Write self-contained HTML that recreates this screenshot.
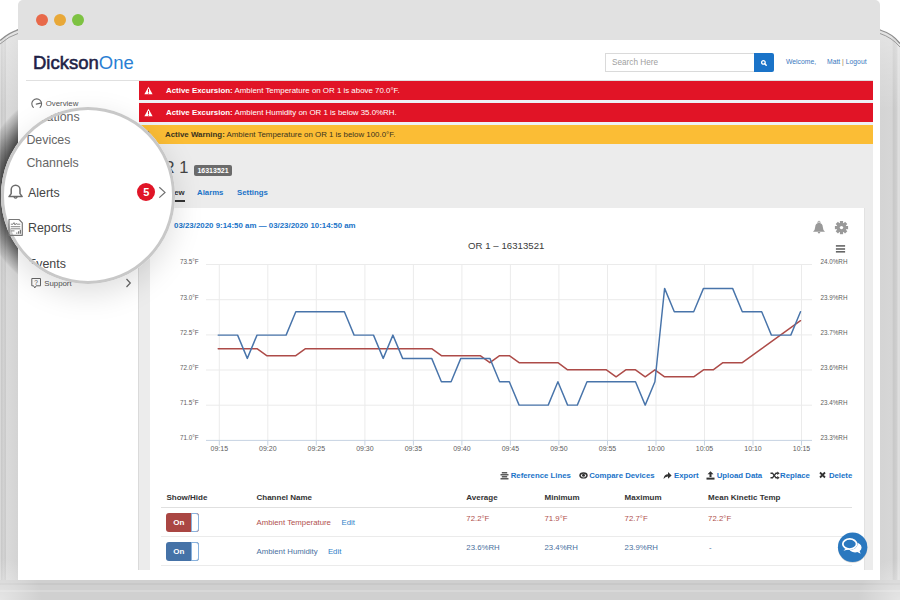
<!DOCTYPE html>
<html><head><meta charset="utf-8">
<style>
*{margin:0;padding:0;box-sizing:border-box}
html,body{width:900px;height:600px;overflow:hidden;background:#fff;font-family:"Liberation Sans",sans-serif;position:relative}
.a{position:absolute;white-space:nowrap}
.dot{width:12px;height:12px;border-radius:50%;top:14px}
.bar{left:139px;width:734px;height:19px;color:#fff;font-size:7.9px;line-height:20.2px}
.red{background:#e11426}
.yel{background:#fbbd35;color:#3a3320}
.tri{position:absolute;left:5px;top:5px}
.tbt{top:470px;font-size:7.8px;line-height:11px;font-weight:bold;color:#1a73c8}
.th{font-size:8px;line-height:8px;font-weight:bold;color:#333}
.td{font-size:7.8px;line-height:7.8px}
.tog{left:166px;width:33px;height:18.5px;border-radius:3px}
.tog span{position:absolute;left:0;top:0;width:25.6px;text-align:center;color:#fff;font-weight:bold;font-size:8px;line-height:19px}
.tog i{position:absolute;left:25px;top:0;width:8px;height:18.5px;background:#fff;border:1px solid #88b2de;border-radius:0 3px 3px 0}
</style></head><body>
<svg class="a" style="left:0;top:0" width="900" height="600" viewBox="0 0 900 600"><defs><linearGradient id="gl" x1="0" x2="1" y1="0" y2="0"><stop offset="0" stop-color="#e0e0e0"/><stop offset="0.08" stop-color="#c9c9c9"/><stop offset="0.2" stop-color="#d2d2d2"/><stop offset="0.3" stop-color="#c9c9c9"/><stop offset="0.36" stop-color="#dadada"/><stop offset="1" stop-color="#d3d3d3"/></linearGradient><linearGradient id="gr" x1="0" x2="1" y1="0" y2="0"><stop offset="0" stop-color="#d4d4d4"/><stop offset="0.6" stop-color="#d6d6d6"/><stop offset="0.68" stop-color="#c8c8c8"/><stop offset="0.85" stop-color="#d0d0d0"/><stop offset="0.9" stop-color="#e0e0e0"/><stop offset="1" stop-color="#dcdcdc"/></linearGradient></defs><path d="M0 41 Q9 33 18 30 V600 H0 Z" fill="url(#gl)"/><path d="M0 40.5 Q9 32.5 18 29.8" fill="none" stroke="#555" stroke-width="1.3"/><path d="M880 30 Q893 34 900 43.5 V600 H880 Z" fill="url(#gr)"/><path d="M880 30 Q893 34 900 43.5" fill="none" stroke="#555" stroke-width="1.3"/><rect x="0" y="580" width="900" height="20" fill="#d0d0d0"/><rect x="0" y="583" width="900" height="2" fill="#c8c8c8"/><rect x="0" y="590" width="900" height="2" fill="#d8d8d8"/><linearGradient id="tw" x1="0" x2="0" y1="0" y2="1"><stop offset="0" stop-color="#fff" stop-opacity="0.35"/><stop offset="1" stop-color="#fff" stop-opacity="0"/></linearGradient><rect x="0" y="30" width="18" height="80" fill="url(#tw)"/><rect x="880" y="30" width="20" height="80" fill="url(#tw)"/><path d="M0 44 Q9 36 18 33.5" fill="none" stroke="#888" stroke-width="0.8"/><path d="M880 33.5 Q892 37.5 900 47" fill="none" stroke="#888" stroke-width="0.8"/><radialGradient id="cw"><stop offset="0" stop-color="#fff" stop-opacity="0.45"/><stop offset="1" stop-color="#fff" stop-opacity="0"/></radialGradient><circle cx="0" cy="600" r="42" fill="url(#cw)"/><circle cx="900" cy="600" r="42" fill="url(#cw)"/></svg>
<div class="a" style="left:0;top:0;width:18px;height:600px;background:radial-gradient(circle at 88.3px 192px, rgba(0,0,0,0.62) 87px, rgba(0,0,0,0.45) 93px, rgba(0,0,0,0.22) 101px, rgba(0,0,0,0.08) 107px, rgba(0,0,0,0) 109px)"></div>
<div class="a" style="left:18px;top:0;width:862px;height:580px;background:#fff;border-radius:5px 5px 0 0"></div>
<div class="a" style="left:18px;top:0;width:862px;height:40px;background:#e1e1e1;border-radius:5px 5px 0 0"></div>
<div class="a dot" style="left:36px;background:#e8694a"></div>
<div class="a dot" style="left:54px;background:#e8a838"></div>
<div class="a dot" style="left:72px;background:#7dc242"></div>
<div class="a" style="left:33px;top:52px;font-size:18.5px;line-height:22px"><span style="color:#1e2246;-webkit-text-stroke:0.55px #1e2246">Dickson</span><span style="color:#2a7fd4">One</span></div>
<div class="a" style="left:26px;top:80px;width:847px;height:1px;background:#e0e0e0"></div>
<div class="a" style="left:605px;top:53px;width:150px;height:19px;border:1px solid #dadada;font-size:8.2px;line-height:17px;color:#a0a0a0;padding-left:6px">Search Here</div>
<div class="a" style="left:754px;top:53px;width:20px;height:19px;background:#1a73c8;border-radius:0 2px 2px 0"></div>
<svg class="a" style="left:759px;top:58px" width="10" height="10" viewBox="0 0 10 10"><circle cx="4.4" cy="4.4" r="1.8" fill="none" stroke="#fff" stroke-width="1.3"/><line x1="5.8" y1="5.8" x2="7.2" y2="7.2" stroke="#fff" stroke-width="1.5" stroke-linecap="round"/></svg>
<div class="a" style="left:786px;top:57px;font-size:6.8px;line-height:10px;color:#3a78c0">Welcome,</div>
<div class="a" style="left:827px;top:57px;font-size:6.8px;line-height:10px;color:#3a78c0">Matt <span style="color:#a07a50">|</span> Logout</div>
<div class="a" style="left:139px;top:81px;width:734px;height:489px;background:#ececec"></div>
<div class="a" style="left:139px;top:100px;width:734px;height:25px;background:#eef1f4"></div>
<div class="a bar red" style="top:81px"><svg class="tri" width="9" height="9" viewBox="0 0 9 9"><path d="M4.5 0.8 L8.6 8.2 L0.4 8.2 Z" fill="#fff"/><rect x="4" y="3" width="1" height="3" fill="#e11426"/><rect x="4" y="6.6" width="1" height="1" fill="#e11426"/></svg><span style="position:absolute;left:27px"><b>Active Excursion:</b> Ambient Temperature on OR 1 is above 70.0°F.</span></div>
<div class="a bar red" style="top:103px"><svg class="tri" width="9" height="9" viewBox="0 0 9 9"><path d="M4.5 0.8 L8.6 8.2 L0.4 8.2 Z" fill="#fff"/><rect x="4" y="3" width="1" height="3" fill="#e11426"/><rect x="4" y="6.6" width="1" height="1" fill="#e11426"/></svg><span style="position:absolute;left:27px"><b>Active Excursion:</b> Ambient Humidity on OR 1 is below 35.0%RH.</span></div>
<div class="a bar yel" style="top:125px"><svg class="tri" width="9" height="9" viewBox="0 0 9 9"><path d="M4.5 0.8 L8.6 8.2 L0.4 8.2 Z" fill="#3a3320"/><rect x="4" y="3" width="1" height="3" fill="#fbbd35"/><rect x="4" y="6.6" width="1" height="1" fill="#fbbd35"/></svg><span style="position:absolute;left:26px"><b>Active Warning:</b> Ambient Temperature on OR 1 is below 100.0°F.</span></div>
<div class="a" style="left:150px;top:159.03px;font-size:16.5px;line-height:16.5px;color:#444;">OR 1</div>
<div class="a" style="left:194px;top:165px;width:38px;height:11px;background:#6b6b6b;border-radius:2px;color:#fff;font-size:7px;line-height:11px;font-weight:bold;text-align:center">16313521</div>
<div class="a" style="left:150px;top:189.00px;font-size:7.8px;line-height:7.8px;color:#333;font-weight:bold">Overview</div>
<div class="a" style="left:150px;top:199.8px;width:35px;height:2px;background:#333"></div>
<div class="a" style="left:197px;top:189.00px;font-size:7.8px;line-height:7.8px;color:#1a73c8;font-weight:bold">Alarms</div>
<div class="a" style="left:237px;top:189.00px;font-size:7.8px;line-height:7.8px;color:#1a73c8;font-weight:bold">Settings</div>
<div class="a" style="left:138px;top:145px;width:12px;height:425px;background:#ececec;border-left:1px solid #dadada"></div>
<div class="a" style="left:150px;top:208px;width:713.5px;height:362px;background:#fff"></div><div class="a" style="left:863.5px;top:208px;width:1px;height:362px;background:#e2e2e2"></div>
<div class="a" style="left:174px;top:220.5px;font-size:7.9px;line-height:10px;font-weight:bold;color:#1a73c8">03/23/2020 9:14:50 am — 03/23/2020 10:14:50 am</div>
<div class="a" style="left:468px;top:240.3px;font-size:9.6px;line-height:11px;color:#3a3a3a;letter-spacing:0.05px">OR 1 – 16313521</div>
<svg class="a" style="left:0;top:0" width="900" height="600" viewBox="0 0 900 600">
<line x1="206" y1="264.5" x2="812" y2="264.5" stroke="#ebebeb" stroke-width="1"/>
<line x1="206" y1="299.7" x2="812" y2="299.7" stroke="#ebebeb" stroke-width="1"/>
<line x1="206" y1="334.9" x2="812" y2="334.9" stroke="#ebebeb" stroke-width="1"/>
<line x1="206" y1="370.0" x2="812" y2="370.0" stroke="#ebebeb" stroke-width="1"/>
<line x1="206" y1="405.2" x2="812" y2="405.2" stroke="#ebebeb" stroke-width="1"/>
<line x1="219.3" y1="264.5" x2="219.3" y2="440.4" stroke="#ebebeb" stroke-width="1"/>
<line x1="267.8" y1="264.5" x2="267.8" y2="440.4" stroke="#ebebeb" stroke-width="1"/>
<line x1="316.3" y1="264.5" x2="316.3" y2="440.4" stroke="#ebebeb" stroke-width="1"/>
<line x1="364.9" y1="264.5" x2="364.9" y2="440.4" stroke="#ebebeb" stroke-width="1"/>
<line x1="413.4" y1="264.5" x2="413.4" y2="440.4" stroke="#ebebeb" stroke-width="1"/>
<line x1="461.9" y1="264.5" x2="461.9" y2="440.4" stroke="#ebebeb" stroke-width="1"/>
<line x1="510.4" y1="264.5" x2="510.4" y2="440.4" stroke="#ebebeb" stroke-width="1"/>
<line x1="558.9" y1="264.5" x2="558.9" y2="440.4" stroke="#ebebeb" stroke-width="1"/>
<line x1="607.5" y1="264.5" x2="607.5" y2="440.4" stroke="#ebebeb" stroke-width="1"/>
<line x1="656.0" y1="264.5" x2="656.0" y2="440.4" stroke="#ebebeb" stroke-width="1"/>
<line x1="704.5" y1="264.5" x2="704.5" y2="440.4" stroke="#ebebeb" stroke-width="1"/>
<line x1="753.0" y1="264.5" x2="753.0" y2="440.4" stroke="#ebebeb" stroke-width="1"/>
<line x1="801.5" y1="264.5" x2="801.5" y2="440.4" stroke="#ebebeb" stroke-width="1"/>
<line x1="206" y1="440.4" x2="812" y2="440.4" stroke="#c6d3e2" stroke-width="1"/>
<line x1="219.3" y1="440.4" x2="219.3" y2="445.5" stroke="#c6d3e2" stroke-width="1"/>
<line x1="267.8" y1="440.4" x2="267.8" y2="445.5" stroke="#c6d3e2" stroke-width="1"/>
<line x1="316.3" y1="440.4" x2="316.3" y2="445.5" stroke="#c6d3e2" stroke-width="1"/>
<line x1="364.9" y1="440.4" x2="364.9" y2="445.5" stroke="#c6d3e2" stroke-width="1"/>
<line x1="413.4" y1="440.4" x2="413.4" y2="445.5" stroke="#c6d3e2" stroke-width="1"/>
<line x1="461.9" y1="440.4" x2="461.9" y2="445.5" stroke="#c6d3e2" stroke-width="1"/>
<line x1="510.4" y1="440.4" x2="510.4" y2="445.5" stroke="#c6d3e2" stroke-width="1"/>
<line x1="558.9" y1="440.4" x2="558.9" y2="445.5" stroke="#c6d3e2" stroke-width="1"/>
<line x1="607.5" y1="440.4" x2="607.5" y2="445.5" stroke="#c6d3e2" stroke-width="1"/>
<line x1="656.0" y1="440.4" x2="656.0" y2="445.5" stroke="#c6d3e2" stroke-width="1"/>
<line x1="704.5" y1="440.4" x2="704.5" y2="445.5" stroke="#c6d3e2" stroke-width="1"/>
<line x1="753.0" y1="440.4" x2="753.0" y2="445.5" stroke="#c6d3e2" stroke-width="1"/>
<line x1="801.5" y1="440.4" x2="801.5" y2="445.5" stroke="#c6d3e2" stroke-width="1"/>
<path d="M218.2 348.7 L227.9 348.7 L237.6 348.7 L247.3 348.7 L257.0 348.7 L266.7 355.7 L276.4 355.7 L286.1 355.7 L295.8 355.7 L305.5 348.7 L315.2 348.7 L325.0 348.7 L334.7 348.7 L344.4 348.7 L354.1 348.7 L363.8 348.7 L373.5 348.7 L383.2 348.7 L392.9 348.7 L402.6 348.7 L412.3 348.7 L422.0 348.7 L431.7 348.7 L441.4 355.7 L451.1 355.7 L460.8 355.7 L470.5 355.7 L480.2 355.7 L489.9 362.7 L499.6 355.7 L509.3 355.7 L519.1 362.7 L528.8 362.7 L538.5 362.7 L548.2 362.7 L557.9 362.7 L567.6 369.8 L577.3 369.8 L587.0 369.8 L596.7 369.8 L606.4 369.8 L616.1 376.8 L625.8 369.8 L635.5 369.8 L645.2 376.8 L654.9 369.8 L664.6 376.8 L674.3 376.8 L684.0 376.8 L693.7 376.8 L703.5 369.8 L713.2 369.8 L722.9 362.7 L732.6 362.7 L742.3 362.7 L752.0 355.7 L761.7 348.7 L771.4 341.7 L781.1 334.7 L790.8 327.7 L800.5 320.7" fill="none" stroke="#ad4b48" stroke-width="1.45" stroke-linejoin="round" stroke-linecap="round"/>
<path d="M218.2 335.1 L227.9 335.1 L237.6 335.1 L247.3 358.4 L257.0 335.1 L266.7 335.1 L276.4 335.1 L286.1 335.1 L295.8 311.7 L305.5 311.7 L315.2 311.7 L325.0 311.7 L334.7 311.7 L344.4 311.7 L354.1 335.1 L363.8 335.1 L373.5 335.1 L383.2 358.4 L392.9 335.1 L402.6 358.4 L412.3 358.4 L422.0 358.4 L431.7 358.4 L441.4 381.7 L451.1 381.7 L460.8 358.4 L470.5 358.4 L480.2 358.4 L489.9 358.4 L499.6 381.7 L509.3 381.7 L519.1 405.1 L528.8 405.1 L538.5 405.1 L548.2 405.1 L557.9 381.7 L567.6 405.1 L577.3 405.1 L587.0 381.7 L596.7 381.7 L606.4 381.7 L616.1 381.7 L625.8 381.7 L635.5 381.7 L645.2 405.1 L654.9 381.7 L664.6 288.4 L674.3 311.7 L684.0 311.7 L693.7 311.7 L703.5 288.4 L713.2 288.4 L722.9 288.4 L732.6 288.4 L742.3 311.7 L752.0 311.7 L761.7 311.7 L771.4 335.1 L781.1 335.1 L790.8 335.1 L800.5 311.7" fill="none" stroke="#4874aa" stroke-width="1.45" stroke-linejoin="round" stroke-linecap="round"/>
</svg>
<div class="a" style="left:150px;width:48.5px;text-align:right;top:257.4px;font-size:6.3px;line-height:10px;color:#606060">73.5°F</div>
<div class="a" style="left:150px;width:48.5px;text-align:right;top:292.6px;font-size:6.3px;line-height:10px;color:#606060">73.0°F</div>
<div class="a" style="left:150px;width:48.5px;text-align:right;top:327.8px;font-size:6.3px;line-height:10px;color:#606060">72.5°F</div>
<div class="a" style="left:150px;width:48.5px;text-align:right;top:362.9px;font-size:6.3px;line-height:10px;color:#606060">72.0°F</div>
<div class="a" style="left:150px;width:48.5px;text-align:right;top:398.1px;font-size:6.3px;line-height:10px;color:#606060">71.5°F</div>
<div class="a" style="left:150px;width:48.5px;text-align:right;top:433.3px;font-size:6.3px;line-height:10px;color:#606060">71.0°F</div>
<div class="a" style="left:820.5px;top:257.4px;font-size:6.3px;line-height:10px;color:#606060">24.0%RH</div>
<div class="a" style="left:820.5px;top:292.6px;font-size:6.3px;line-height:10px;color:#606060">23.9%RH</div>
<div class="a" style="left:820.5px;top:327.8px;font-size:6.3px;line-height:10px;color:#606060">23.7%RH</div>
<div class="a" style="left:820.5px;top:362.9px;font-size:6.3px;line-height:10px;color:#606060">23.6%RH</div>
<div class="a" style="left:820.5px;top:398.1px;font-size:6.3px;line-height:10px;color:#606060">23.4%RH</div>
<div class="a" style="left:820.5px;top:433.3px;font-size:6.3px;line-height:10px;color:#606060">23.3%RH</div>
<div class="a" style="left:199.3px;width:40px;text-align:center;top:444.3px;font-size:7px;line-height:10px;color:#606060">09:15</div>
<div class="a" style="left:247.8px;width:40px;text-align:center;top:444.3px;font-size:7px;line-height:10px;color:#606060">09:20</div>
<div class="a" style="left:296.3px;width:40px;text-align:center;top:444.3px;font-size:7px;line-height:10px;color:#606060">09:25</div>
<div class="a" style="left:344.9px;width:40px;text-align:center;top:444.3px;font-size:7px;line-height:10px;color:#606060">09:30</div>
<div class="a" style="left:393.4px;width:40px;text-align:center;top:444.3px;font-size:7px;line-height:10px;color:#606060">09:35</div>
<div class="a" style="left:441.9px;width:40px;text-align:center;top:444.3px;font-size:7px;line-height:10px;color:#606060">09:40</div>
<div class="a" style="left:490.4px;width:40px;text-align:center;top:444.3px;font-size:7px;line-height:10px;color:#606060">09:45</div>
<div class="a" style="left:538.9px;width:40px;text-align:center;top:444.3px;font-size:7px;line-height:10px;color:#606060">09:50</div>
<div class="a" style="left:587.5px;width:40px;text-align:center;top:444.3px;font-size:7px;line-height:10px;color:#606060">09:55</div>
<div class="a" style="left:636.0px;width:40px;text-align:center;top:444.3px;font-size:7px;line-height:10px;color:#606060">10:00</div>
<div class="a" style="left:684.5px;width:40px;text-align:center;top:444.3px;font-size:7px;line-height:10px;color:#606060">10:05</div>
<div class="a" style="left:733.0px;width:40px;text-align:center;top:444.3px;font-size:7px;line-height:10px;color:#606060">10:10</div>
<div class="a" style="left:781.5px;width:40px;text-align:center;top:444.3px;font-size:7px;line-height:10px;color:#606060">10:15</div>
<svg class="a" style="left:834px;top:243px" width="12" height="11" viewBox="0 0 12 11"><rect x="1.9" y="2.1" width="9.2" height="1.6" fill="#666"/><rect x="1.9" y="5.2" width="9.2" height="1.6" fill="#666"/><rect x="1.9" y="8.0" width="9.2" height="1.6" fill="#666"/></svg>
<svg class="a" style="left:812px;top:220px" width="14" height="16" viewBox="0 0 14 16"><path d="M1 11.8 Q3 10.5 3.2 7 Q3.4 3.2 7 2.8 Q10.6 3.2 10.8 7 Q11 10.5 13 11.8 Z" fill="#999"/><circle cx="7" cy="2.3" r="1.1" fill="none" stroke="#999" stroke-width="0.9"/><path d="M5.6 12 Q7 15 8.4 12 Z" fill="#999"/></svg>
<svg class="a" style="left:834px;top:220px" width="15" height="15" viewBox="0 0 15 15"><g fill="#999" transform="translate(7.5 7.6)"><circle r="4.9"/><rect x="-1.6" y="-6.6" width="3.2" height="3" transform="rotate(0)"/><rect x="-1.6" y="-6.6" width="3.2" height="3" transform="rotate(45)"/><rect x="-1.6" y="-6.6" width="3.2" height="3" transform="rotate(90)"/><rect x="-1.6" y="-6.6" width="3.2" height="3" transform="rotate(135)"/><rect x="-1.6" y="-6.6" width="3.2" height="3" transform="rotate(180)"/><rect x="-1.6" y="-6.6" width="3.2" height="3" transform="rotate(225)"/><rect x="-1.6" y="-6.6" width="3.2" height="3" transform="rotate(270)"/><rect x="-1.6" y="-6.6" width="3.2" height="3" transform="rotate(315)"/><circle r="1.7" fill="#fff"/></g></svg>
<svg class="a" style="left:500px;top:471px" width="9" height="9" viewBox="0 0 9 9"><rect x="1.8" y="1.2" width="5.4" height="1.2" fill="#333"/><rect x="0.5" y="3.2" width="8" height="1.2" fill="#333"/><rect x="1.8" y="5.2" width="5.4" height="1.2" fill="#333"/><rect x="0.5" y="7.2" width="8" height="1.2" fill="#333"/></svg>
<div class="a tbt" style="left:510.7px">Reference Lines</div>
<svg class="a" style="left:579px;top:471px" width="9" height="9" viewBox="0 0 9 9"><ellipse cx="4.5" cy="4.4" rx="4.2" ry="3.1" fill="#333"/><ellipse cx="4.5" cy="4.6" rx="2.6" ry="1.9" fill="#fff"/><circle cx="4.5" cy="4.3" r="1.5" fill="#333"/></svg>
<div class="a tbt" style="left:589.2px">Compare Devices</div>
<svg class="a" style="left:663px;top:471px" width="9" height="9" viewBox="0 0 9 9"><path d="M0.5 8 Q1 3.5 5 3.3 L5 1 L8.6 4.4 L5 7.8 L5 5.5 Q2.3 5.4 0.5 8 Z" fill="#333"/></svg>
<div class="a tbt" style="left:674px">Export</div>
<svg class="a" style="left:706px;top:471px" width="9" height="9" viewBox="0 0 9 9"><path d="M4.5 0.3 L7.5 3.3 L5.5 3.3 L5.5 6 L3.5 6 L3.5 3.3 L1.5 3.3 Z" fill="#333"/><rect x="0.5" y="6.6" width="8" height="2" fill="#333"/></svg>
<div class="a tbt" style="left:716.7px">Upload Data</div>
<svg class="a" style="left:770px;top:471px" width="10" height="9" viewBox="0 0 10 9"><path d="M0.5 2.2 L2.5 2.2 L6 6.8 L7.5 6.8" fill="none" stroke="#333" stroke-width="1.4"/><path d="M0.5 6.8 L2.5 6.8 L6 2.2 L7.5 2.2" fill="none" stroke="#333" stroke-width="1.4"/><path d="M7.2 0.4 L9.7 2.2 L7.2 4 Z M7.2 5 L9.7 6.8 L7.2 8.6 Z" fill="#333"/></svg>
<div class="a tbt" style="left:780px">Replace</div>
<svg class="a" style="left:819px;top:471px" width="7" height="8" viewBox="0 0 7 8"><path d="M1 1.5 L6 6.5 M6 1.5 L1 6.5" stroke="#333" stroke-width="1.8"/></svg>
<div class="a tbt" style="left:828.9px">Delete</div>
<div class="a th" style="left:166.5px;top:494.03px">Show/Hide</div>
<div class="a th" style="left:256.5px;top:494.03px">Channel Name</div>
<div class="a th" style="left:466.3px;top:494.03px">Average</div>
<div class="a th" style="left:544.5px;top:494.03px">Minimum</div>
<div class="a th" style="left:624.6px;top:494.03px">Maximum</div>
<div class="a th" style="left:708.1px;top:494.03px">Mean Kinetic Temp</div>
<div class="a" style="left:161px;top:507px;width:691px;height:1.2px;background:#e0e0e0"></div>
<div class="a" style="left:161px;top:536px;width:691px;height:1px;background:#ebebeb"></div>
<div class="a" style="left:161px;top:565px;width:691px;height:1px;background:#ebebeb"></div>
<div class="a tog" style="top:513px;background:#aa4643"><span>On</span><i></i></div>
<div class="a tog" style="top:542px;background:#4572a7"><span>On</span><i></i></div>
<div class="a td" style="left:256.5px;top:518.80px;color:#b0504d">Ambient Temperature</div>
<div class="a td" style="left:341.5px;top:518.80px;color:#2f7fc8">Edit</div>
<div class="a td" style="left:256.5px;top:548.00px;color:#4a6f9e">Ambient Humidity</div>
<div class="a td" style="left:327.9px;top:548.00px;color:#2f7fc8">Edit</div>
<div class="a td" style="left:466.3px;top:514.70px;color:#b0504d">72.2°F</div>
<div class="a td" style="left:544.5px;top:514.70px;color:#b0504d">71.9°F</div>
<div class="a td" style="left:624.6px;top:514.70px;color:#b0504d">72.7°F</div>
<div class="a td" style="left:708.1px;top:514.70px;color:#b0504d">72.2°F</div>
<div class="a td" style="left:466.3px;top:543.90px;color:#4a6f9e">23.6%RH</div>
<div class="a td" style="left:544.5px;top:543.90px;color:#4a6f9e">23.4%RH</div>
<div class="a td" style="left:624.6px;top:543.90px;color:#4a6f9e">23.9%RH</div>
<div class="a td" style="left:709px;top:543.90px;color:#4a6f9e">-</div>
<div class="a" style="left:45.8px;top:99.90px;font-size:7.8px;line-height:7.8px;color:#555;">Overview</div>
<svg class="a" style="left:30px;top:98px" width="13" height="11" viewBox="0 0 13 11"><path d="M3.3 9.3 A4.9 4.9 0 1 1 10.1 9.3" fill="none" stroke="#666" stroke-width="1.1" stroke-linecap="round"/><path d="M6.3 6.2 L10.6 5.2" stroke="#666" stroke-width="1.2" stroke-linecap="round"/></svg>
<div class="a" style="left:44.3px;top:279.70px;font-size:7.8px;line-height:7.8px;color:#555;">Support</div>
<svg class="a" style="left:30px;top:277px" width="12" height="13" viewBox="0 0 12 13"><path d="M1.8 1.5 H10.5 V8.8 H6.2 L4.8 10.9 L3.6 8.8 H1.8 Z" fill="none" stroke="#666" stroke-width="1"/><text x="6.1" y="7.6" font-size="6.5" font-family="Liberation Sans" fill="#555" text-anchor="middle">?</text></svg>
<svg class="a" style="left:125px;top:278px" width="7" height="10" viewBox="0 0 7 10"><path d="M1.5 1 L5.3 5 L1.5 9" fill="none" stroke="#666" stroke-width="1.2"/></svg>
<div class="a" style="left:0.9px;top:107.3px;width:174.2px;height:176.3px;border-radius:50%;box-shadow:0 10px 30px rgba(0,0,0,0.13)"></div>
<div class="a" style="left:0.9px;top:107.3px;width:174.2px;height:176.3px;border-radius:50%;background:#fff;overflow:hidden">
<div class="a" style="left:25.7px;top:4.10px;font-size:12.4px;line-height:12.4px;color:#666;">Locations</div>
<div class="a" style="left:25.5px;top:26.60px;font-size:12.4px;line-height:12.4px;color:#666;">Devices</div>
<div class="a" style="left:25.5px;top:49.70px;font-size:12.4px;line-height:12.4px;color:#666;">Channels</div>
<div class="a" style="left:27.1px;top:79.40px;font-size:12.4px;line-height:12.4px;color:#444;">Alerts</div>
<div class="a" style="left:27.1px;top:115.10px;font-size:12.4px;line-height:12.4px;color:#444;">Reports</div>
<div class="a" style="left:27.1px;top:151.20px;font-size:12.4px;line-height:12.4px;color:#444;">Events</div>
</div>
<div class="a" style="left:0.9px;top:107.3px;width:174.2px;height:176.3px;border-radius:50%;border:3.7px solid #c8c8c8"></div>
<svg class="a" style="left:4px;top:180px" width="24" height="24" viewBox="0 0 24 24"><path d="M5 16.6 H18.2 L16 13.6 V9.6 A4.4 4.4 0 0 0 7.2 9.6 V13.6 Z" fill="none" stroke="#6b6b6b" stroke-width="1.5" stroke-linejoin="round"/><path d="M10 16.9 Q11.6 19.4 13.2 16.9" fill="none" stroke="#6b6b6b" stroke-width="1.4"/></svg>
<svg class="a" style="left:7px;top:218px" width="17" height="19" viewBox="0 0 17 19"><path d="M2 1.5 H12 L15.3 4.8 V17.3 H2 Z" fill="none" stroke="#777" stroke-width="1.2" stroke-linejoin="round"/><path d="M3.8 6.2 H6 L7 4.6 L8 7 L9 5.4 L10 6.2 H13.3 M3.8 8.7 H13.3 M3.8 10.8 H13.3 M3.8 12.9 H7.5" fill="none" stroke="#777" stroke-width="0.9"/><path d="M9.8 15.8 V14.5 M11.6 15.8 V13.2 M13.4 15.8 V11.8" stroke="#777" stroke-width="1.2"/></svg>
<div class="a" style="left:137px;top:182.8px;width:18.4px;height:18.4px;border-radius:50%;background:#e01527;color:#fff;font-weight:bold;font-size:11px;line-height:18.4px;text-align:center">5</div>
<svg class="a" style="left:158px;top:186px" width="9" height="13" viewBox="0 0 9 13"><path d="M1.3 1.2 L7 6.4 L1.3 11.6" fill="none" stroke="#707070" stroke-width="1.2"/></svg>
<svg class="a" style="left:835px;top:530px" width="35" height="35" viewBox="0 0 600 600"><circle cx="302" cy="310" r="252" fill="#000" opacity="0.18"/><circle cx="302" cy="296" r="252" fill="#2a78bf"/><ellipse cx="345" cy="300" rx="110" ry="85" fill="#fff"/><path d="M350 360 L440 408 L405 320 Z" fill="#fff"/><ellipse cx="252" cy="240" rx="135" ry="102" fill="#2a78bf"/><path d="M200 305 L145 356 L265 325 Z" fill="#fff"/><ellipse cx="252" cy="240" rx="118" ry="86" fill="#2a78bf" stroke="#fff" stroke-width="30"/></svg>
</body></html>
